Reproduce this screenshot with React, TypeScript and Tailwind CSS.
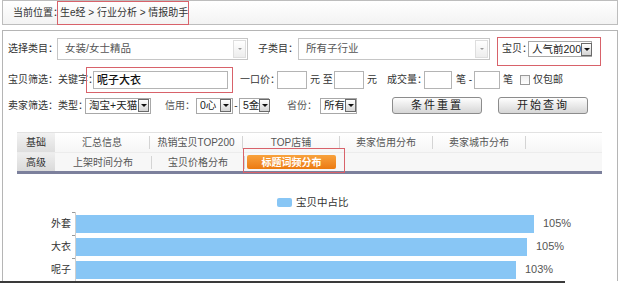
import React from "react";

const font = "font-['Liberation_Sans','Noto_Sans_CJK_SC',sans-serif]";

function DropBtn() {
  return (
    <span className="flex h-[13px] w-[11px] flex-none items-center justify-center border border-[#6a6a6a] bg-linear-to-b from-white to-[#d4d4d4]">
      <span className="h-0 w-0 border-x-[3px] border-t-[3px] border-x-transparent border-t-[#111]" />
    </span>
  );
}

function MiniSelect({ text, className }: { text: string; className: string }) {
  return (
    <div className={`flex h-[16px] flex-none items-center justify-between border border-[#a8a8a8] bg-white pl-[3px] pr-px ${className}`}>
      <span className="whitespace-nowrap text-[10.5px] leading-none text-[#222]">{text}</span>
      <DropBtn />
    </div>
  );
}

function BigSelect({ text, className }: { text: string; className: string }) {
  return (
    <div className={`flex h-[22px] flex-none items-center justify-between border border-[#c6c6c6] bg-white pl-[7px] pr-px ${className}`}>
      <span className="text-[10.5px] text-[#555]">{text}</span>
      <span className="flex h-[18px] w-[13px] items-center justify-center border border-[#dedede] bg-linear-to-b from-white to-[#ededed]">
        <span className="h-0 w-0 border-x-[2px] border-t-[2px] border-x-transparent border-t-[#999]" />
      </span>
    </div>
  );
}

function Input({ className }: { className: string }) {
  return <div className={`h-[18px] flex-none border border-[#b4b4b4] bg-white ${className}`} />;
}

function Sep() {
  return <div className="h-[13px] w-px flex-none bg-[#d4d4d4]" />;
}

function Tab({ text, className }: { text: string; className: string }) {
  return (
    <div className={`flex flex-none items-center justify-center whitespace-nowrap text-[10px] text-[#555] ${className}`}>
      {text}
    </div>
  );
}

function Label({ text, className }: { text: string; className: string }) {
  return <span className={`flex-none whitespace-nowrap text-[10px] leading-none ${className}`}>{text}</span>;
}

const bars = [
  { label: "外套", w: "w-[458px]", v: "105%" },
  { label: "大衣", w: "w-[451px]", v: "105%" },
  { label: "呢子", w: "w-[440px]", v: "103%" },
];

export default function App() {
  return (
    <div className={`relative flex h-[283px] w-[620px] flex-col overflow-hidden bg-white ${font}`}>
      {/* breadcrumb */}
      <div className="ml-[2px] flex h-[25px] w-[616px] flex-none items-center border border-[#bdbdbd] bg-linear-to-b from-white to-[#f3f3f3] pl-[10px] text-[10px] text-[#333]">
        <span className="w-[47px] flex-none whitespace-nowrap">当前位置：</span>
        <span className="whitespace-nowrap">生e经 &gt; 行业分析 &gt; 情报助手</span>
      </div>

      {/* main panel */}
      <div className="ml-[2px] mt-[5px] flex w-[616px] flex-1 flex-col border-x border-t border-[#b5b5b5] text-[#333]">
        {/* row 1 */}
        <div className="mt-[7px] flex h-[22px] items-center pl-[5px]">
          <Label text="选择类目：" className="w-[49px]" />
          <BigSelect text="女装/女士精品" className="w-[191px]" />
          <Label text="子类目：" className="ml-[10px] w-[40px]" />
          <BigSelect text="所有子行业" className="w-[192px]" />
          <Label text="宝贝：" className="ml-[12px] w-[26px]" />
          <MiniSelect text="人气前200" className="w-[64px]" />
        </div>

        {/* row 2 */}
        <div className="mt-[11px] flex h-[18px] items-center pl-[5px]">
          <Label text="宝贝筛选：关键字：" className="w-[85px]" />
          <div className="flex h-[18px] w-[135px] flex-none items-center border border-[#b4b4b4] bg-white pl-[3px] text-[11px] font-medium text-[#111]">
            呢子大衣
          </div>
          <Label text="一口价：" className="ml-[12px] w-[37px]" />
          <Input className="w-[30px]" />
          <Label text="元 至" className="ml-[3px] w-[24px]" />
          <Input className="w-[30px]" />
          <Label text="元" className="ml-[3px] w-[20px]" />
          <Label text="成交量：" className="w-[37px]" />
          <Input className="w-[28px]" />
          <Label text="笔 -" className="ml-[4px] w-[18px]" />
          <Input className="w-[26px]" />
          <Label text="笔" className="ml-[3px] w-[17px]" />
          <span className="h-[10px] w-[10px] flex-none border border-[#9a9a9a] bg-linear-to-b from-[#eee] to-white" />
          <Label text="仅包邮" className="ml-[3px]" />
        </div>

        {/* row 3 */}
        <div className="mt-[8px] flex h-[17px] items-center pl-[5px]">
          <Label text="卖家筛选：类型：" className="w-[77px]" />
          <MiniSelect text="淘宝+天猫" className="w-[66px]" />
          <Label text="信用：" className="ml-[14px] w-[31px] text-[#555]" />
          <MiniSelect text="0心" className="w-[37px]" />
          <Label text="-" className="w-[6px] text-center" />
          <MiniSelect text="5金" className="w-[30px]" />
          <Label text="省份：" className="ml-[18px] w-[33px] text-[#555]" />
          <MiniSelect text="所有" className="w-[37px]" />
          <button className="ml-[35px] h-[17px] w-[90px] flex-none rounded-[3px] border border-[#8c8c8c] bg-linear-to-b from-[#fefefe] to-[#d6d6d6] text-[11px] leading-none tracking-[2px] text-[#222]">
            条件重置
          </button>
          <button className="ml-[16px] h-[17px] w-[90px] flex-none rounded-[3px] border border-[#8c8c8c] bg-linear-to-b from-[#fefefe] to-[#d6d6d6] text-[11px] leading-none tracking-[2px] text-[#222]">
            开始查询
          </button>
        </div>

        {/* tabs */}
        <div className="ml-[14px] mt-[18px] flex w-[585px] flex-col border-t border-[#e2e2e2]">
          <div className="flex h-[19px] items-center bg-linear-to-b from-white to-[#f6f6f6]">
            <div className="flex h-full w-[38px] flex-none items-center justify-center bg-linear-to-b from-[#f2f2f2] to-[#dedede] text-[10px] text-[#333]">
              基础
            </div>
            <Tab text="汇总信息" className="w-[94px]" />
            <Sep />
            <Tab text="热销宝贝TOP200" className="w-[92px]" />
            <Sep />
            <Tab text="TOP店铺" className="w-[96px]" />
            <Sep />
            <Tab text="卖家信用分布" className="w-[92px]" />
            <Sep />
            <Tab text="卖家城市分布" className="w-[92px]" />
            <Sep />
          </div>
          <div className="flex h-[19px] items-center border-t border-[#ececec] bg-[#f7f7f7]">
            <div className="flex h-full w-[38px] flex-none items-center justify-center bg-linear-to-b from-[#eeeeee] to-[#dadada] text-[10px] text-[#333]">
              高级
            </div>
            <Tab text="上架时间分布" className="w-[96px]" />
            <Sep />
            <Tab text="宝贝价格分布" className="w-[92px]" />
            <Sep />
            <div className="flex w-[99px] flex-none justify-center pr-[8px] pl-[2px]">
              <div className="flex h-[14px] w-full items-center justify-center rounded-[2px] bg-linear-to-b from-[#f8a23c] to-[#ec7a0e] text-[10px] font-bold text-white">
                标题词频分布
              </div>
            </div>
            <Sep />
          </div>
          <div className="h-[3px] bg-[#7c809c]" />
        </div>

        {/* legend */}
        <div className="mt-[23px] flex h-[10px] items-center pl-[274px]">
          <span className="h-[9px] w-[15px] rounded-[2px] bg-[#88c6f5]" />
          <span className="ml-[4px] text-[10.5px] leading-none text-[#333]">宝贝中占比</span>
        </div>

        {/* bars */}
        <div className="mt-[5px] flex flex-col">
          {bars.map((b) => (
            <div key={b.label} className="flex h-[23px] items-center">
              <span className="w-[68px] flex-none text-right text-[10px] text-[#333]">{b.label}</span>
              <div className="relative ml-[4px] flex h-full items-center border-l border-[#cfcfcf]">
                <span className="absolute -left-[4px] top-0 h-px w-[3px] bg-[#999]" />
                <div className={`h-[18px] ${b.w} bg-[#88c6f5]`} />
                <span className="ml-[9px] text-[11px] text-[#555]">{b.v}</span>
              </div>
            </div>
          ))}
        </div>
      </div>
      <div className="h-[2px] w-[565px] flex-none bg-[#3a3a3a]" />

      {/* red annotation boxes */}
      <div className="absolute left-[57px] top-[1px] h-[24px] w-[132px] border border-[#d8626a]" />
      <div className="absolute left-[497px] top-[37px] h-[29px] w-[104px] border border-[#d8626a]" />
      <div className="absolute left-[86px] top-[67px] h-[26px] w-[147px] border border-[#d8626a]" />
      <div className="absolute left-[243px] top-[148px] h-[25px] w-[102px] border border-[#d8626a]" />
    </div>
  );
}
